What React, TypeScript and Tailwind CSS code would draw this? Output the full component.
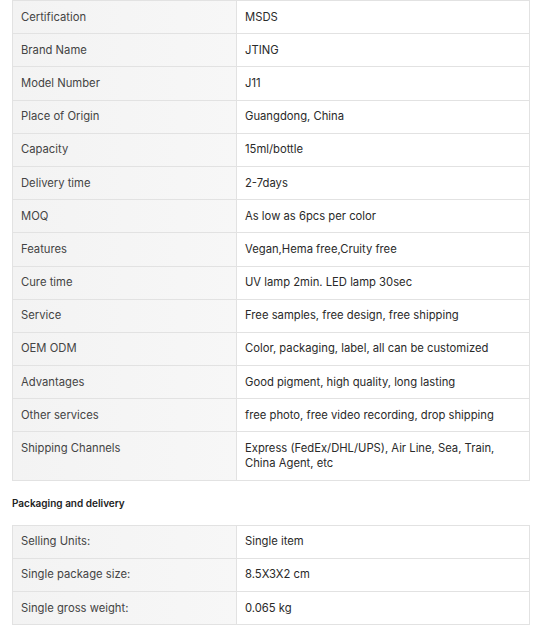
import React from 'react';

const specs: [string, string][] = [
  ['Certification', 'MSDS'],
  ['Brand Name', 'JTING'],
  ['Model Number', 'J11'],
  ['Place of Origin', 'Guangdong, China'],
  ['Capacity', '15ml/bottle'],
  ['Delivery time', '2-7days'],
  ['MOQ', 'As low as 6pcs per color'],
  ['Features', 'Vegan,Hema free,Cruity free'],
  ['Cure time', 'UV lamp 2min. LED lamp 30sec'],
  ['Service', 'Free samples, free design, free shipping'],
  ['OEM ODM', 'Color, packaging, label, all can be customized'],
  ['Advantages', 'Good pigment, high quality, long lasting'],
  ['Other services', 'free photo, free video recording, drop shipping'],
  ['Shipping Channels', 'Express (FedEx/DHL/UPS), Air Line, Sea, Train, China Agent, etc'],
];

const packaging: [string, string][] = [
  ['Selling Units:', 'Single item'],
  ['Single package size:', '8.5X3X2 cm'],
  ['Single gross weight:', '0.065 kg'],
];

function SpecTable({ rows }: { rows: [string, string][] }) {
  return (
    <div className="w-[518px] border border-[#e2e2e2]">
      {rows.map(([label, value], i) => (
        <div
          key={label}
          className={`flex ${i < rows.length - 1 ? 'border-b border-[#e2e2e2]' : ''}`}
        >
          <div className="w-[224px] shrink-0 bg-gradient-to-r from-[#f3f3f3] to-[#f7f7f7] border-r border-[#e2e2e2] px-[8px] py-[8.6px] leading-[15px] text-[#444]">
            {label}
          </div>
          <div className="flex-1 px-[8px] py-[8.6px] leading-[15px] text-[#2a2a2a]">{value}</div>
        </div>
      ))}
    </div>
  );
}

export default function App() {
  return (
    <div className="w-[554px] h-[635px] bg-white px-3 text-[11.25px] font-['Inter',sans-serif] overflow-hidden">
      <SpecTable rows={specs} />
      <div className="mt-[14px] mb-[14px] text-[10px] leading-4 font-semibold text-[#222]">Packaging and delivery</div>
      <SpecTable rows={packaging} />
    </div>
  );
}
